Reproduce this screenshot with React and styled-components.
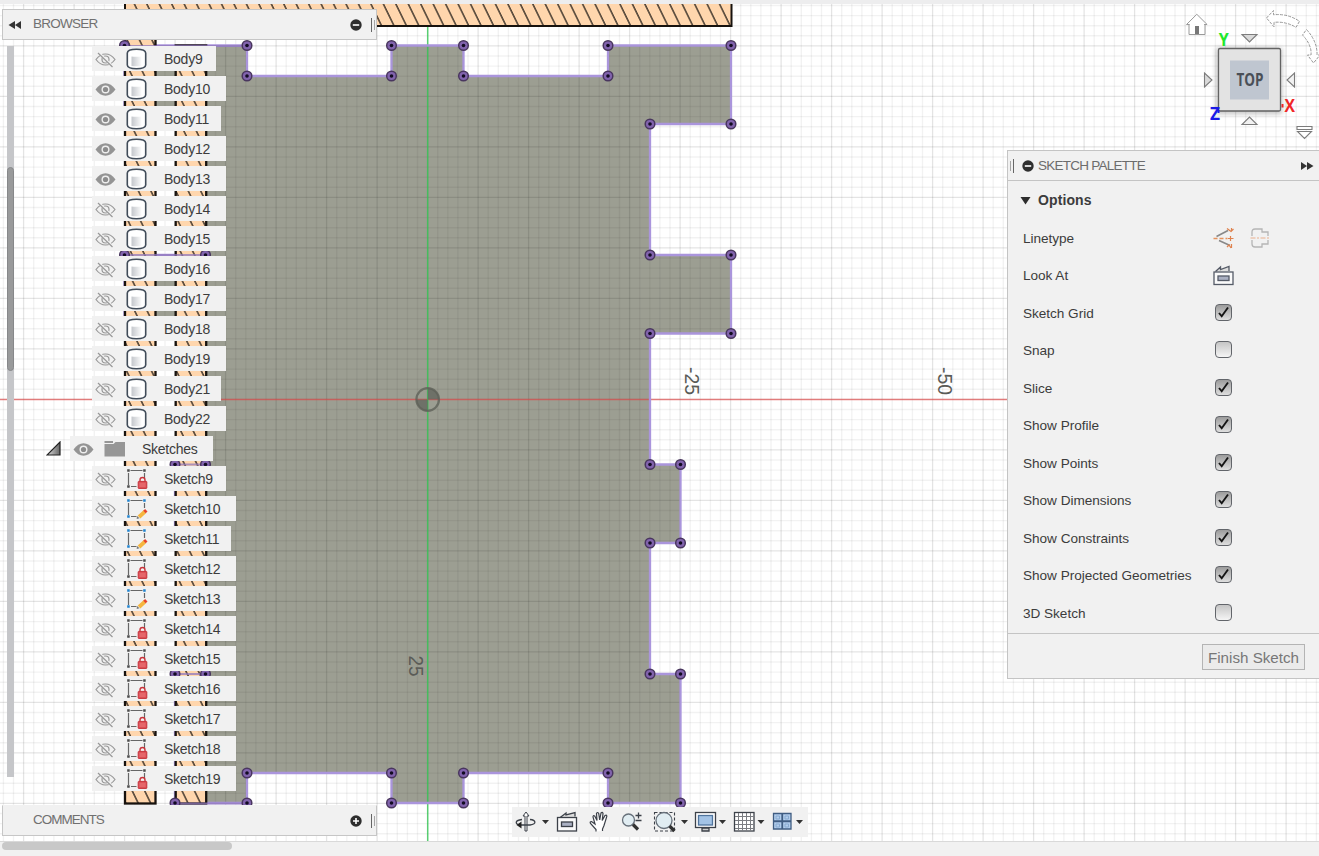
import React from "react";
import styled, { createGlobalStyle } from "styled-components";

const GlobalStyle = createGlobalStyle`
  * { box-sizing: border-box; }
  html, body { margin: 0; padding: 0; overflow: hidden; }
  body { font-family: "Liberation Sans", Arial, sans-serif; color: #3c3c3c; background: #fff; }
  svg { display: block; flex: none; }
`;

const Screen = styled.div`
  position: relative;
  width: 1319px;
  height: 856px;
  overflow: hidden;
  display: grid;
  grid-template-columns: 377px 1fr 312px;
  grid-template-rows: 841px 15px;
`;

const Backdrop = styled.div`
  position: absolute;
  inset: 0;
  z-index: -1;
`;

const LeftColumn = styled.div`
  display: flex;
  flex-direction: column;
  padding-top: 9px;
  min-width: 0;
`;

const Bar = styled.div`
  display: flex;
  align-items: center;
  flex: none;
  width: 375px;
  height: ${(p) => p.$height}px;
  margin-left: 2px;
  padding: 0 1px 0 5px;
  background: #f1f1f1;
  border: 1px solid #c6c6c6;
  ${(p) => p.$openTop && "border-top-color: #f1f1f1;"}
`;

const BarTitle = styled.div`
  flex: 1;
  margin-left: ${(p) => p.$indent}px;
  padding-bottom: 2px;
  font-size: 13.5px;
  letter-spacing: ${(p) => p.$spacing || 0}px;
  line-height: 18px;
  color: #707070;
`;

const Grip = styled.div`
  display: flex;
  align-items: center;
  gap: 2px;
  width: 4px;
  height: 14px;
  margin-left: 9px;
  ${(p) => p.$mirrored && "flex-direction: row-reverse; margin: 0 8px 0 0;"}
  &::before, &::after { content: ""; width: 1px; height: 14px; background: #666; }
  &::after { height: 10px; background: #a5a5a5; }
`;

const TreeArea = styled.div`
  display: flex;
  height: 765px;
  padding-top: 6px;
`;

const ScrollTrack = styled.div`
  width: 7px;
  height: 731px;
  margin-left: 7px;
  padding-top: 121px;
  background: #c5c6c9;
  flex: none;
`;

const ScrollThumb = styled.div`
  height: 204px;
  border-radius: 4px;
  background: #999a9b;
  border: 1px solid #87888a;
`;

const TreeList = styled.div`
  display: flex;
  flex-direction: column;
  gap: 5px;
  padding-left: 31px;
`;

const TreeRow = styled.div`
  display: flex;
  align-items: center;
  height: 25px;
  padding-left: ${(p) => (p.$folder ? 0 : 47)}px;
`;

const Twisty = styled.div`
  width: 25px;
  padding-left: 1px;
`;

const Chip = styled.div`
  display: flex;
  align-items: center;
  width: ${(p) => p.$width}px;
  height: 25px;
  padding: 1px 0 0 3px;
  background: #f1f1f1;
`;

const IconSlot = styled.div`
  width: 30px;
  margin-left: 10px;
`;

const RowLabel = styled.div`
  margin-left: 8px;
  font-size: 14px;
  letter-spacing: -0.25px;
  line-height: 24px;
  white-space: nowrap;
`;

const CenterColumn = styled.div`
  display: flex;
  align-items: flex-end;
  padding: 0 0 4px 135px;
`;

const NavBar = styled.div`
  display: flex;
  align-items: center;
  width: 296px;
  height: 30px;
  background: #f1f1f1;
`;

const RightColumn = styled.div`
  display: flex;
  flex-direction: column;
`;

const CubeArea = styled.div`
  height: 150px;
  padding-left: 153px;
`;

const Palette = styled.div`
  display: flex;
  flex-direction: column;
  height: 529px;
  background: #f1f1f1;
  border: 1px solid #c4c4c4;
  border-right: 0;
`;

const PaletteHeader = styled.div`
  display: flex;
  align-items: center;
  height: 30px;
  padding: 0 5px 0 2px;
  border-bottom: 1px solid #c4c4c4;
`;

const PaletteTitle = styled.div`
  flex: 1;
  margin-left: 4px;
  padding-bottom: 1px;
  font-size: 13.5px;
  letter-spacing: -0.75px;
  color: #6c6c6c;
`;

const SectionTitle = styled.div`
  display: flex;
  align-items: center;
  gap: 7px;
  height: 38.5px;
  padding-left: 12px;
  font-size: 14px;
  letter-spacing: 0.1px;
  font-weight: 700;
`;

const OptionRow = styled.div`
  display: flex;
  align-items: center;
  height: 37.5px;
  padding-left: 15px;
`;

const OptionLabel = styled.div`
  width: 190px;
  font-size: 13.6px;
  letter-spacing: -0.03px;
  white-space: nowrap;
`;

const OptionIcons = styled.div`
  display: flex;
  gap: 15px;
`;

const Check = styled.div`
  display: flex;
  align-items: center;
  justify-content: center;
  width: 17px;
  height: 17px;
  margin: -2px 0 0 2px;
  border: 1.5px solid #62656a;
  border-radius: 4px;
  background: ${(p) => (p.$on ? "linear-gradient(#9c9c9c, #dedede)" : "linear-gradient(#c5c5c5, #f5f5f5)")};
`;

const PaletteFooter = styled.div`
  display: flex;
  justify-content: flex-end;
  margin-top: 1px;
  padding: 10px 14px 0 0;
  border-top: 1px solid #c4c4c4;
  flex: 1;
`;

const FinishButton = styled.button`
  width: 103px;
  height: 26px;
  padding: 0;
  border: 1px solid #b4b4b4;
  background: #ebebeb;
  color: #777;
  font-family: inherit;
  font-size: 15.2px;
  white-space: nowrap;
`;

const StatusStrip = styled.div`
  grid-column: 1 / -1;
  background: #f1f1f1;
  border-top: 1px solid #d9d9d9;
`;

const HorizontalThumb = styled.div`
  width: 230px;
  height: 8px;
  margin-left: 2px;
  border-radius: 4px;
  background: #c8c8c8;
`;

const UNIT = 10.1;
const OX = 427.6;
const OY = 399.4;

const PROFILE = [
  [124.5, 45.5], [247, 45.5], [247, 76], [391.5, 76], [391.5, 45.5], [463.5, 45.5], [463.5, 76], [608, 76],
  [608, 45.5], [731, 45.5], [731, 124], [650, 124], [650, 255], [731, 255], [731, 333.5], [650, 333.5],
  [650, 464.5], [680.5, 464.5], [680.5, 543], [650, 543], [650, 674], [680.5, 674], [680.5, 803], [608, 803],
  [608, 773], [463.5, 773], [463.5, 803], [391.5, 803], [391.5, 773], [247, 773], [247, 803], [175, 803],
  [175, 674], [205.5, 674], [205.5, 543], [175, 543], [175, 464.5], [205.5, 464.5], [205.5, 333.5],
  [124.5, 333.5], [124.5, 255], [205.5, 255], [205.5, 124], [124.5, 124],
];

function gridLines(origin, limit) {
  const lines = [];
  for (let k = -Math.ceil(origin / UNIT); origin + k * UNIT < limit; k++) {
    lines.push({ at: origin + k * UNIT, major: k % 5 === 0 });
  }
  return lines;
}

function Drawing() {
  const points = PROFILE.map((p) => p.join(",")).join(" ");
  return (
    <svg width="1319" height="856">
      <defs>
        <pattern id="hatch" width="12.45" height="25" patternUnits="userSpaceOnUse" patternTransform="translate(731 4) skewX(26)">
          <rect width="12.45" height="25" fill="#ffd6ad" />
          <line x1="1" y1="0" x2="1" y2="25" stroke="#15110d" strokeWidth="1.3" />
        </pattern>
      </defs>
      <rect width="1319" height="856" fill="#fff" />
      <polygon points={points} fill="#9c9e92" />
      {gridLines(OX, 1319).map((l) => (
        <line key={l.at} x1={l.at} x2={l.at} y1="4" y2="841" stroke="#000" strokeOpacity={l.major ? 0.105 : 0.052} strokeWidth={l.major ? 1.3 : 1.4} />
      ))}
      {gridLines(OY, 841).map((l) => (
        <line key={l.at} y1={l.at} y2={l.at} x1="0" x2="1319" stroke="#000" strokeOpacity={l.major ? 0.105 : 0.052} strokeWidth={l.major ? 1.3 : 1.4} />
      ))}
      <line x1="0" x2="1319" y1="399.5" y2="399.5" stroke="#e04b4b" strokeOpacity=".68" strokeWidth="1.5" />
      <line x1="427.7" x2="427.7" y1="26" y2="841" stroke="#35c855" strokeOpacity=".8" strokeWidth="1.5" />
      <g fill="#5f6259" fillOpacity=".75">
        <path d="M427.7 399.5V388a11.5 11.5 0 0 1 11.5 11.5zM427.7 399.5V411a11.5 11.5 0 0 1-11.5-11.5z" />
        <circle cx="427.7" cy="399.5" r="11.3" fill="none" stroke="#5f6259" strokeOpacity=".8" strokeWidth="2.2" />
      </g>
      <polygon points={points} fill="none" stroke="#aa95dc" strokeWidth="2.3" />
      <rect x="125" y="-10" width="606.5" height="36" fill="url(#hatch)" stroke="#17120e" strokeWidth="2" />
      <rect x="125" y="38" width="30.5" height="765.5" fill="url(#hatch)" stroke="#17120e" strokeWidth="2.3" />
      <rect x="175.7" y="45.5" width="30.5" height="758" fill="url(#hatch)" stroke="#17120e" strokeWidth="2.3" />
      <path d="M124.5 46h122M124.5 255h81M175 464.5h30.5M175 674h30.5M175 803.5h72" stroke="#9279bd" strokeOpacity=".75" strokeWidth="2" />
      {PROFILE.map(([x, y]) => (
        <g key={`${x}-${y}`}>
          <circle cx={x} cy={y} r="4.8" fill="#8163ad" stroke="#49365e" strokeWidth="1.5" />
          <circle cx={x} cy={y} r="1.8" fill="#120b22" />
        </g>
      ))}
      <g fill="#5a5b57" fontFamily="Liberation Sans, sans-serif" fontSize="19.5">
        <text transform="translate(685 367) rotate(90)" textLength="28" lengthAdjust="spacingAndGlyphs">-25</text>
        <text transform="translate(938 367) rotate(90)" textLength="28" lengthAdjust="spacingAndGlyphs">-50</text>
        <text transform="translate(409 655.5) rotate(90)" textLength="21" lengthAdjust="spacingAndGlyphs">25</text>
      </g>
      <rect width="1319" height="4" fill="#ededee" />
    </svg>
  );
}

function ViewCube() {
  return (
    <svg width="159" height="150" viewBox="1160 0 159 150">
      <defs>
        <filter id="soft" x="-20%" y="-20%" width="140%" height="140%"><feGaussianBlur stdDeviation="2.5" /></filter>
        <linearGradient id="tri" x1="0" y1="0" x2="1" y2="1"><stop offset="0" stopColor="#ccc" /><stop offset="1" stopColor="#fff" /></linearGradient>
      </defs>
      <path d="M1189 24v10.5h16V24M1186.5 24.5l10.3-10.2 10.3 10.2h-3M1186.5 24.5h3" fill="#fff" stroke="#9a9a9a" />
      <rect x="1195" y="26" width="4" height="8" fill="#777" />
      <g fill="#fff" stroke="#989898" strokeWidth="1" strokeDasharray="3 1.2">
        <path d="M1266.500 18l7-7.500v4.300q14-1.500 26 6.500l-3.500 6q-10-6-22-5v4.500z" />
        <path d="M1306.500 29.500q11 12 10.500 25.500h3l-6.500 8-6-8h3.500q1-10-8.500-20z" />
      </g>
      <rect x="1216" y="48" width="66" height="66" fill="#555" opacity=".35" filter="url(#soft)" />
      <rect x="1218.500" y="48.500" width="62" height="62.500" rx="1.500" fill="#e3e3e3" stroke="#636363" strokeWidth="1.300" />
      <rect x="1230" y="60.500" width="39" height="39" fill="#bfc6d0" />
      <g fontFamily="Open Sans, Noto Sans, sans-serif" fontWeight="700">
        <text x="1236.500" y="86" fontSize="17" fill="#4a4f57" textLength="27" lengthAdjust="spacingAndGlyphs">TOP</text>
        <text x="1218.700" y="45.500" fontSize="17" fill="#20e82c" textLength="10" lengthAdjust="spacingAndGlyphs">Y</text>
        <text x="1284.500" y="111.500" fontSize="17" fill="#f02626" textLength="10.500" lengthAdjust="spacingAndGlyphs">X</text>
        <text x="1210" y="120" fontSize="17" fill="#1a1ae8" textLength="10" lengthAdjust="spacingAndGlyphs">Z</text>
      </g>
      <rect x="1281.500" y="104" width="2" height="3.500" fill="#f02626" />
      <path d="M1218.500 110v3" stroke="#1a1ae8" strokeWidth="2" />
      <g fill="url(#tri)" stroke="#7c7c7c" strokeWidth="1.100">
        <path d="M1242 34.500h15l-7.500 7.500zM1242 124.500h15l-7.500-7.500zM1204.500 73v14l7.500-7zM1294.500 73v14l-7.500-7z" />
        <path d="M1297 126.500h15v3h-15zM1297.500 131.500h14l-7 7z" fill="#fff" />
      </g>
    </svg>
  );
}

function Eye({ open }) {
  return open ? (
    <svg width="21" height="17" viewBox="0 0 21 17">
      <path d="M.5 8.500Q5 2.300 10.500 2.300T20.500 8.500Q16 14.700 10.500 14.700T.5 8.500z" fill="#949494" />
      <circle cx="10.500" cy="8.500" r="4" fill="#eee" /><circle cx="10.500" cy="8.500" r="2.600" fill="#8c8c8c" />
    </svg>
  ) : (
    <svg width="21" height="17" viewBox="0 0 21 17" fill="none" stroke="#989898" strokeWidth="1.200">
      <path d="M1 8.500Q5 3 10.500 3T20 8.500Q16 14 10.500 14T1 8.500z" />
      <circle cx="10.500" cy="8.500" r="3.500" />
      <path d="M3.700 1.500l14 14.300" stroke="#f1f1f1" strokeWidth="2.500" />
      <path d="M3 2l14.500 14" />
    </svg>
  );
}

function BodyIcon() {
  return (
    <svg width="22" height="22" viewBox="0 0 22 22">
      <defs>
        <linearGradient id="cyl"><stop offset="0" stopColor="#c4c7cc" /><stop offset="1" stopColor="#fbfbfb" /></linearGradient>
      </defs>
      <path d="M1.300 5Q1.500 1.300 10.500 1.300T19.700 5v12q-.2 3.700-9.200 3.700T1.300 17z" fill="#fff" stroke="#414c59" strokeWidth="1.600" />
      <path d="M5.500 8.500q5 .7 10 0v9.500q-5 .7-10 0z" fill="url(#cyl)" />
    </svg>
  );
}

function SketchIcon({ locked }) {
  const dot = locked ? "#4b4b4b" : "#1f83cf";
  return (
    <svg width="22" height="22" viewBox="0 0 22 22">
      <path d="M4.500 2.500h12M2.500 5v12M18.500 5v5M5 18.500h5.500" stroke="#666" strokeWidth="1.200" />
      <path d="M1.200 1.200h2.500v2.500H1.200zM17.200 1.200h2.500v2.500h-2.500zM1.200 17.200h2.500v2.500H1.200z" fill={dot} />
      {locked ? (
        <g>
          <path d="M14 13.500v-1.500a2.500 2.500 0 0 1 5 0v1.500" fill="none" stroke="#c8343b" strokeWidth="1.400" />
          <rect x="12.200" y="13.400" width="8.600" height="7" rx=".5" fill="#df5257" stroke="#c5313a" />
          <path d="M13.500 16h6M13.500 18h6" stroke="#ee8588" strokeWidth=".8" />
        </g>
      ) : (
        <g>
          <path d="M13 19l6-5.500" stroke="#f5b640" strokeWidth="3.800" />
          <path d="M18.500 14l1.800-1.700" stroke="#e8432e" strokeWidth="3.500" />
          <path d="M11 18l2.500 2.300-2.800.6z" fill="#777" />
        </g>
      )}
    </svg>
  );
}

const FolderIcon = () => (
  <svg width="22" height="18" viewBox="0 0 22 18"><path d="M.5 1h8.500v2H.5zM.5 4h9l2-2h9.500V16.500H.5z" fill="#969696" /></svg>
);

const RoundButton = ({ plus }) => (
  <svg width="12" height="12" viewBox="0 0 12 12">
    <circle cx="6" cy="6" r="5.700" fill="#2e2e2e" />
    <path d={plus ? "M3 6h6M6 3v6" : "M2.800 6h6.400"} stroke="#fff" strokeWidth="1.600" />
  </svg>
);

const DoubleArrow = ({ right }) => (
  <svg width="14" height="10" viewBox="0 0 14 10">
    <path d={right ? "M1 1l6 4-6 4zM7 1l6.500 4L7 9z" : "M13 1L7 5l6 4zM7 1L.5 5 7 9z"} fill="#333" />
  </svg>
);

const CheckMark = () => (
  <svg width="13" height="13" viewBox="0 0 13 13"><path d="M2 7l2.700 3.200L11 1.500" fill="none" stroke="#151515" strokeWidth="1.900" /></svg>
);

const LookAtIcon = () => (
  <svg width="22" height="22" viewBox="0 0 22 22" fill="none" stroke="#555b67" strokeWidth="1.300">
    <path d="M2.500 6.500l5-4.500v2.500L16 1.500v4.500" fill="#ddd" />
    <rect x="1" y="7" width="19" height="12.500" fill="#fafafa" />
    <rect x="5" y="11" width="11" height="4.500" fill="#aab0c2" />
  </svg>
);

const ConstructionIcon = () => (
  <svg width="22" height="22" viewBox="0 0 22 22" fill="none">
    <path d="M3.500 9.500L15 3.500M6 13.500L17 18.500" stroke="#888" strokeWidth="1.600" />
    <path d="M.5 11.500h14" stroke="#e6925c" strokeWidth="1.300" strokeDasharray="4 2" />
    <path d="M15 11.500h5.500M17.500 9v5M14 1.500l4 3M18.500 1v3l2-2M14 20l2-2 2 3M18.500 17v4" stroke="#df824e" strokeWidth="1.200" />
  </svg>
);

const CenterlineIcon = () => (
  <svg width="22" height="22" viewBox="0 0 22 22" fill="none">
    <path d="M2 9V5q0-3 3-3h7v3h6v4M2 13v4q0 3 3 3h7v-3h6v-4" stroke="#b5b5b5" strokeWidth="1.300" />
    <path d="M.5 11h20" stroke="#e9b08e" strokeWidth="1.100" strokeDasharray="5 1.500 2 1.500" />
  </svg>
);

function NavIcons() {
  return (
    <svg width="296" height="30" viewBox="512 807 296 30" fill="none" stroke="#3c4149" strokeWidth="1.300">
      <path d="M542 820h7l-3.500 4zM681 820h7l-3.500 4zM719 820h7l-3.500 4zM757.500 820h7l-3.500 4zM796 820h7l-3.500 4z" fill="#333" stroke="none" />
      <path d="M525 831v-15h-2l3-4 3 4h-2v15z" fill="#fff" strokeWidth="1" />
      <path d="M522 819.500c-8 1-7 5-1 5.500h9c7-1 6-5 0-5.500" />
      <path d="M516.500 825l5-3.500v7z" fill="#222" stroke="none" />
      <path d="M559.500 818l6.500-5v2l9-2.500v4" fill="#ddd" />
      <rect x="557.500" y="817.500" width="19" height="13.500" fill="#fafafa" />
      <rect x="561.500" y="822" width="11" height="4.500" fill="#aab0c2" />
      <path d="M596 831.500v-2l-5.500-6q-1-2 1-2l3.500 2.500-2-7q0-2 1.700-1l2.300 4.500-.5-7q1-2 2.200 0l1 6.500 1.300-7q1.500-1.500 2 .5l-.8 7 2.800-5q2-1 1.800 1l-2.800 9-1.500 3.500v2" fill="#fff" strokeWidth="1.200" />
      <circle cx="628.500" cy="820" r="6" fill="#e1edf2" stroke="#67707a" />
      <path d="M633 824.500l5 5" stroke="#333" strokeWidth="3.200" />
      <path d="M635.500 815.500h6M638.500 812.500v6M635.500 820.500h6" />
      <path d="M654.500 812.500h20v18.500h-20z" strokeDasharray="3 2" strokeWidth="1.100" />
      <circle cx="664" cy="820.500" r="8" fill="#e1edf2" stroke="#67707a" />
      <path d="M669.500 826l5 5" stroke="#333" strokeWidth="3.200" />
      <rect x="695.500" y="812.500" width="20" height="15" fill="#fff" />
      <rect x="698.500" y="815.500" width="14" height="9.500" fill="#a3c3e6" stroke="#50749d" />
      <path d="M702 828h7v3h-7z" fill="#ccc" />
      <rect x="734.500" y="812.500" width="19.500" height="18.500" fill="#fff" />
      <path d="M738.500 813v18M742.500 813v18M746.500 813v18M750.500 813v18M735 816.500h19M735 820.500h19M735 824.500h19M735 828.500h19" strokeWidth="1" stroke="#7b7d82" />
      <path d="M773.500 813.500h8.500v7.500h-8.500zM782.500 813.500h8.500v7.500h-8.500zM773.500 821.500h8.500v7.500h-8.500zM782.500 821.500h8.500v7.500h-8.500z" fill="#b2cdec" stroke="#405d82" />
      <path d="M776 816h3.500v3H776zM785 816h3.500v3H785zM776 824h3.500v3H776zM785 824h3.500v3H785z" stroke="#88aad0" strokeWidth="1" />
    </svg>
  );
}

const TREE = [
  ...[9, 10, 11, 12, 13, 14, 15, 16, 17, 18, 19, 21, 22].map((n) => ({
    name: `Body${n}`, kind: "body", open: n >= 10 && n <= 13, width: n === 9 ? 124 : n === 11 || n === 21 ? 129 : 134,
  })),
  { name: "Sketches", kind: "folder", open: true, width: 143 },
  ...[9, 10, 11, 12, 13, 14, 15, 16, 17, 18, 19].map((n) => ({
    name: `Sketch${n}`, kind: "sketch", locked: ![10, 11, 13].includes(n), width: n === 9 ? 134 : n === 11 ? 139 : 144,
  })),
];

const OPTIONS = [
  ["Sketch Grid", true], ["Snap", false], ["Slice", true], ["Show Profile", true], ["Show Points", true],
  ["Show Dimensions", true], ["Show Constraints", true], ["Show Projected Geometries", true], ["3D Sketch", false],
];

function TreeItem({ item }) {
  const folder = item.kind === "folder";
  return (
    <TreeRow $folder={folder}>
      {folder && (
        <Twisty>
          <svg width="15" height="15" viewBox="0 0 15 15">
            <defs><linearGradient id="tw"><stop offset="0" stopColor="#ddd" /><stop offset="1" stopColor="#666" /></linearGradient></defs>
            <path d="M14 1v13H1z" fill="url(#tw)" stroke="#222" strokeWidth="1.200" />
          </svg>
        </Twisty>
      )}
      <Chip $width={item.width}>
        <Eye open={item.open} />
        <IconSlot>
          {item.kind === "body" && <BodyIcon />}
          {folder && <FolderIcon />}
          {item.kind === "sketch" && <SketchIcon locked={item.locked} />}
        </IconSlot>
        <RowLabel>{item.name}</RowLabel>
      </Chip>
    </TreeRow>
  );
}

export default function App() {
  return (
    <>
      <GlobalStyle />
      <Screen>
        <Backdrop><Drawing /></Backdrop>
        <LeftColumn>
          <Bar $height={31}>
            <DoubleArrow />
            <BarTitle $indent={11} $spacing={-0.75}>BROWSER</BarTitle>
            <RoundButton />
            <Grip />
          </Bar>
          <TreeArea>
            <ScrollTrack><ScrollThumb /></ScrollTrack>
            <TreeList>{TREE.map((item) => <TreeItem key={item.name} item={item} />)}</TreeList>
          </TreeArea>
          <Bar $height={31} $openTop>
            <BarTitle $indent={25} $spacing={-1}>COMMENTS</BarTitle>
            <RoundButton plus />
            <Grip />
          </Bar>
        </LeftColumn>
        <CenterColumn>
          <NavBar><NavIcons /></NavBar>
        </CenterColumn>
        <RightColumn>
          <CubeArea><ViewCube /></CubeArea>
          <Palette>
            <PaletteHeader>
              <Grip $mirrored />
              <RoundButton />
              <PaletteTitle>SKETCH PALETTE</PaletteTitle>
              <DoubleArrow right />
            </PaletteHeader>
            <SectionTitle>
              <svg width="11" height="9" viewBox="0 0 11 9"><path d="M.5 1h10l-5 7.500z" fill="#2d2d2d" /></svg>
              Options
            </SectionTitle>
            <OptionRow>
              <OptionLabel>Linetype</OptionLabel>
              <OptionIcons><ConstructionIcon /><CenterlineIcon /></OptionIcons>
            </OptionRow>
            <OptionRow>
              <OptionLabel>Look At</OptionLabel>
              <LookAtIcon />
            </OptionRow>
            {OPTIONS.map(([label, on]) => (
              <OptionRow key={label}>
                <OptionLabel>{label}</OptionLabel>
                <Check $on={on}>{on && <CheckMark />}</Check>
              </OptionRow>
            ))}
            <PaletteFooter><FinishButton>Finish Sketch</FinishButton></PaletteFooter>
          </Palette>
        </RightColumn>
        <StatusStrip><HorizontalThumb /></StatusStrip>
      </Screen>
    </>
  );
}
